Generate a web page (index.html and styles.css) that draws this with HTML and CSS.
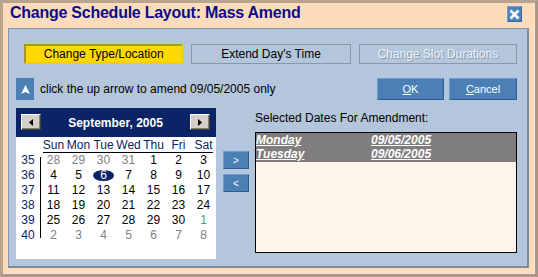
FILE: index.html
```html
<!DOCTYPE html>
<html>
<head>
<meta charset="utf-8">
<link rel="stylesheet" href="styles.css">
</head>
<body>
<div class="dialog">
  <div class="titlebar">
    <div class="title">Change Schedule Layout: Mass Amend</div>
    <div class="close"><svg width="11" height="11" viewBox="0 0 11 11"><path d="M1.5 1.5 L9.5 9.5 M9.5 1.5 L1.5 9.5" stroke="#fff" stroke-width="2.6"/></svg></div>
  </div>
  <div class="panel">
    <div class="tabs">
      <div class="tab active">Change Type/Location</div>
      <div class="tab">Extend Day's Time</div>
      <div class="tab disabled">Change Slot Durations</div>
    </div>
    <div class="actions">
      <div class="uparrow"><svg width="9" height="9" viewBox="0 0 9 9"><path d="M4.5 0 L9 9 L4.5 7 L0 9 Z" fill="#fff"/></svg></div>
      <div class="hint">click the up arrow to amend 09/05/2005 only</div>
      <div class="btns">
        <div class="btn"><u>O</u>K</div>
        <div class="btn"><u>C</u>ancel</div>
      </div>
    </div>
    <div class="main">
      <div class="calendar">
        <div class="cal-head">
          <div class="navbtn"><svg width="4" height="7" viewBox="0 0 4 7"><path d="M4 0 L0 3.5 L4 7 Z" fill="#000"/></svg></div>
          <div class="cal-title">September, 2005</div>
          <div class="navbtn"><svg width="4" height="7" viewBox="0 0 4 7"><path d="M0 0 L4 3.5 L0 7 Z" fill="#000"/></svg></div>
        </div>
        <div class="cal-body">
          <div class="dow-row">
            <span>Sun</span><span>Mon</span><span>Tue</span><span>Wed</span><span>Thu</span><span>Fri</span><span>Sat</span>
          </div>
          <div class="dow-line"></div>
          <div class="weeks-wrap">
            <div class="weeknums">
              <span>35</span><span>36</span><span>37</span><span>38</span><span>39</span><span>40</span>
            </div>
            <div class="vline"></div>
            <div class="days">
              <span class="other">28</span><span class="other">29</span><span class="other">30</span><span class="other">31</span><span>1</span><span>2</span><span>3</span>
              <span>4</span><span>5</span><span><b class="sel">6</b></span><span>7</span><span>8</span><span>9</span><span>10</span>
              <span>11</span><span>12</span><span>13</span><span>14</span><span>15</span><span>16</span><span>17</span>
              <span>18</span><span>19</span><span>20</span><span>21</span><span>22</span><span>23</span><span>24</span>
              <span>25</span><span>26</span><span>27</span><span>28</span><span>29</span><span>30</span><span class="other">1</span>
              <span class="other">2</span><span class="other">3</span><span class="other">4</span><span class="other">5</span><span class="other">6</span><span class="other">7</span><span class="other">8</span>
            </div>
          </div>
        </div>
      </div>
      <div class="movers">
        <div class="mbtn">&gt;</div>
        <div class="mbtn">&lt;</div>
      </div>
      <div class="selected">
        <div class="sel-label">Selected Dates For Amendment:</div>
        <div class="listbox">
          <div class="row"><span class="day">Monday</span><span class="date">09/05/2005</span></div>
          <div class="row"><span class="day">Tuesday</span><span class="date">09/06/2005</span></div>
        </div>
      </div>
    </div>
  </div>
</div>
</body>
</html>
```

FILE: styles.css
```css
html, body {
  margin: 0;
  padding: 0;
}
body {
  width: 538px;
  height: 277px;
  background: #e6d6c6;
  font-family: "Liberation Sans", Arial, sans-serif;
  font-size: 12px;
  color: #000;
}
.dialog {
  box-sizing: border-box;
  width: 538px;
  height: 277px;
  background: #fddcbc;
  border: 3px solid #ab9783;
  border-top-color: #b8a48f;
  border-left-color: #b8a48f;
  box-shadow: inset -1px -1px 0 #f2e6da;
  display: flex;
  flex-direction: column;
}
.titlebar {
  height: 25px;
  display: flex;
  align-items: flex-start;
  padding: 1px 13px 0 7px;
  box-sizing: border-box;
}
.title {
  flex: 1;
  font-size: 16px;
  font-weight: bold;
  line-height: 18px;
  letter-spacing: -0.25px;
  color: #0c0c88;
}
.close {
  margin-top: 2px;
  width: 15px;
  height: 16px;
  box-sizing: border-box;
  background: #4d82bb;
  border: 1px solid #6f9ccb;
  border-right-color: #35679c;
  border-bottom-color: #35679c;
  display: flex;
  align-items: center;
  justify-content: center;
}
.panel {
  margin: 0 6px 6px 5px;
  flex: 1;
  background: #b4c6dc;
  border: 1px solid #8797ab;
  border-right: 2px solid #7b8a9c;
  border-bottom: 2px solid #7b8a9c;
  padding: 15px 10px 0 7px;
}
.tabs {
  display: flex;
  gap: 8px;
  margin-left: 8px;
}
.tab {
  box-sizing: border-box;
  width: 160px;
  height: 20px;
  border: 1px solid #8a97a8;
  display: flex;
  align-items: center;
  justify-content: center;
  font-size: 12px;
}
.tab:last-child {
  width: 159px;
}
.tab.active {
  background: #ffd800;
  border: 2px solid #f2cf00;
  border-top-color: #a69633;
  border-left-color: #a69633;
}
.tab.disabled {
  color: #eef3f9;
  text-shadow: 1px 1px 0 #8898ae;
}
.actions {
  display: flex;
  align-items: center;
  margin-top: 14px;
  height: 22px;
}
.uparrow {
  width: 18px;
  height: 22px;
  background: #4a80b6;
  display: flex;
  align-items: center;
  justify-content: center;
}
.hint {
  margin-left: 6px;
  font-size: 12px;
}
.btns {
  margin-left: auto;
  display: flex;
  gap: 5px;
}
.btn {
  box-sizing: border-box;
  width: 67px;
  height: 22px;
  background: #4a80b6;
  border: 1px solid #6c9bcd;
  border-right-color: #2e5c8e;
  border-bottom-color: #2e5c8e;
  color: #fff;
  font-size: 11px;
  display: flex;
  align-items: center;
  justify-content: center;
}
.btn + .btn {
  width: 68px;
}
.main {
  display: flex;
  margin-top: 8px;
}
.calendar {
  width: 201px;
  background: #fff;
  height: 151px;
}
.cal-head {
  height: 29px;
  background: #0b2467;
  display: flex;
  align-items: flex-start;
  padding: 6px 6px 0 5px;
  box-sizing: border-box;
}
.navbtn {
  box-sizing: border-box;
  width: 20px;
  height: 16px;
  background: #d4d0c8;
  border: 1px solid #fff;
  border-right-color: #404040;
  border-bottom-color: #404040;
  box-shadow: inset -1px -1px 0 #808080;
  display: flex;
  align-items: center;
  justify-content: center;
}
.cal-title {
  flex: 1;
  text-align: center;
  color: #fff;
  font-weight: bold;
  font-size: 12px;
  line-height: 16px;
  padding-top: 1px;
}
.cal-body {
  padding-top: 1px;
}
.dow-row {
  margin-left: 25px;
  display: grid;
  grid-template-columns: repeat(7, 25px);
  height: 14px;
  line-height: 14px;
  color: #0b2467;
  text-align: center;
}
.dow-line {
  margin-left: 27px;
  width: 170px;
  height: 1px;
  background: #000;
}
.weeks-wrap {
  display: flex;
}
.weeknums {
  width: 24px;
  display: flex;
  flex-direction: column;
  text-align: center;
  color: #0b2467;
}
.weeknums span {
  height: 15px;
  line-height: 15px;
}
.vline {
  width: 1px;
  background: #000;
  margin: 4px 0 5px;
}
.days {
  display: grid;
  grid-template-columns: repeat(7, 25px);
  grid-auto-rows: 15px;
  text-align: center;
  line-height: 15px;
}
.days .other {
  color: #808080;
}
.days span {
  display: flex;
  align-items: center;
  justify-content: center;
}
.sel {
  font-weight: normal;
  display: block;
  width: 21px;
  height: 11px;
  line-height: 11px;
  border-radius: 50%;
  background: #0b2467;
  color: #fff;
}
.movers {
  margin-left: 7px;
  padding-top: 43px;
  display: flex;
  flex-direction: column;
  gap: 5px;
}
.mbtn {
  box-sizing: border-box;
  width: 26px;
  height: 18px;
  background: #4a80b6;
  border: 1px solid #6c9bcd;
  border-right-color: #2e5c8e;
  border-bottom-color: #2e5c8e;
  color: #fff;
  font-size: 10px;
  display: flex;
  align-items: center;
  justify-content: center;
}
.selected {
  margin-left: 6px;
  width: 264px;
}
.sel-label {
  padding-top: 2px;
  line-height: 16px;
  margin-bottom: 6px;
}
.listbox {
  box-sizing: border-box;
  height: 121px;
  background: #fdf4ea;
  border: 1px solid #000;
}
.row {
  display: flex;
  height: 15px;
  line-height: 15px;
  background: #7f7d7d;
  color: #fff;
  font-weight: bold;
  font-style: italic;
  text-decoration: underline;
}
.row:first-child {
  height: 14px;
}
.day {
  width: 115px;
}
```
